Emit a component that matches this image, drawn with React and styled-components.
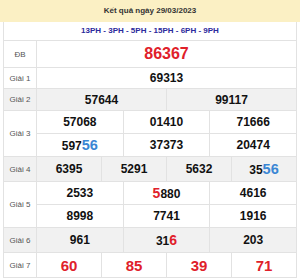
import styled, { createGlobalStyle } from 'styled-components';

const GlobalStyle = createGlobalStyle`
  body {
    margin: 0;
    background: #fff;
    font-family: Arial, 'Liberation Sans', sans-serif;
  }
`;

const rows = [
  { label: 'Giải 1', lines: [[{ v: '69313' }]], height: 20 },
  { label: 'Giải 2', gray: true, lines: [[{ v: '57644' }, { v: '99117' }]], height: 21 },
  {
    label: 'Giải 3',
    lines: [
      [{ v: '57068' }, { v: '01410' }, { v: '71666' }],
      [{ v: '597', hi: '56' }, { v: '37373' }, { v: '20474' }],
    ],
    height: 22,
  },
  {
    label: 'Giải 4',
    gray: true,
    lines: [[{ v: '6395' }, { v: '5291' }, { v: '5632' }, { v: '35', hi: '56' }]],
    height: 24,
  },
  {
    label: 'Giải 5',
    lines: [
      [{ v: '2533' }, { pre: '5', v: '880' }, { v: '4616' }],
      [{ v: '8998' }, { v: '7741' }, { v: '1916' }],
    ],
    height: 22,
  },
  { label: 'Giải 6', gray: true, lines: [[{ v: '961' }, { v: '31', tail: '6' }, { v: '203' }]], height: 24 },
  {
    label: 'Giải 7',
    lines: [[{ red: '60' }, { red: '85' }, { red: '39' }, { red: '71' }]],
    height: 24,
  },
];

export default function App() {
  return (
    <>
      <GlobalStyle />
      <Page>
        <Title>Kết quả ngày 29/03/2023</Title>
        <Board>
          <Stations>13PH - 3PH - 5PH - 15PH - 6PH - 9PH</Stations>
          <Row>
            <Label>ĐB</Label>
            <Cells>
              <Line $h={26}>
                <Cell>
                  <Special>86367</Special>
                </Cell>
              </Line>
            </Cells>
          </Row>
          {rows.map((row) => (
            <Row key={row.label} $gray={row.gray}>
              <Label>{row.label}</Label>
              <Cells>
                {row.lines.map((line, i) => (
                  <Line key={i} $h={row.height}>
                    {line.map((c, j) => (
                      <Cell key={j}>
                        {c.red ? (
                          <Red>{c.red}</Red>
                        ) : (
                          <Num>
                            {c.pre && <RedDigit>{c.pre}</RedDigit>}
                            {c.v}
                            {c.tail && <RedDigit>{c.tail}</RedDigit>}
                            {c.hi && <Blue>{c.hi}</Blue>}
                          </Num>
                        )}
                      </Cell>
                    ))}
                  </Line>
                ))}
              </Cells>
            </Row>
          ))}
        </Board>
      </Page>
    </>
  );
}

const Page = styled.div`
  width: 300px;
  height: 280px;
  background: #fff;
  overflow: hidden;
`;

const Title = styled.div`
  height: 22px;
  line-height: 22px;
  background: #fbf0c4;
  text-align: center;
  font-size: 8px;
  font-weight: bold;
  color: #333;
`;

const Board = styled.div`
  margin: 0 3px 0 3px;
  border: 1px solid #e2e2e2;
  border-top: none;
`;

const Stations = styled.div`
  height: 18px;
  line-height: 18px;
  text-align: center;
  font-size: 8px;
  font-weight: bold;
  color: #2b2a9c;
  border-bottom: 1px solid #e2e2e2;
`;

const Row = styled.div`
  display: flex;
  background: ${(p) => (p.$gray ? '#f1f1f1' : '#fff')};
  border-bottom: 1px solid #e2e2e2;
  &:last-child {
    border-bottom: none;
  }
`;

const Label = styled.div`
  width: 32px;
  flex: none;
  display: flex;
  align-items: center;
  justify-content: center;
  font-size: 8px;
  color: #555;
  border-right: 1px solid #e2e2e2;
`;

const Cells = styled.div`
  flex: 1;
  display: flex;
  flex-direction: column;
`;

const Line = styled.div`
  display: flex;
  height: ${(p) => p.$h}px;
  & + & {
    border-top: 1px solid #e2e2e2;
  }
`;

const Cell = styled.div`
  flex: 1;
  display: flex;
  align-items: center;
  justify-content: center;
  line-height: 1;
  & + & {
    border-left: 1px solid #e2e2e2;
  }
`;

const Num = styled.span`
  font-size: 12px;
  font-weight: bold;
  color: #111;
  display: flex;
  align-items: baseline;
`;

const Blue = styled.span`
  font-size: 14.5px;
  color: #3a86d4;
`;

const RedDigit = styled.span`
  font-size: 14px;
  color: #e0202a;
`;

const Red = styled.span`
  font-size: 15px;
  font-weight: bold;
  color: #e0202a;
`;

const Special = styled.span`
  font-size: 16px;
  font-weight: bold;
  color: #e0202a;
`;
